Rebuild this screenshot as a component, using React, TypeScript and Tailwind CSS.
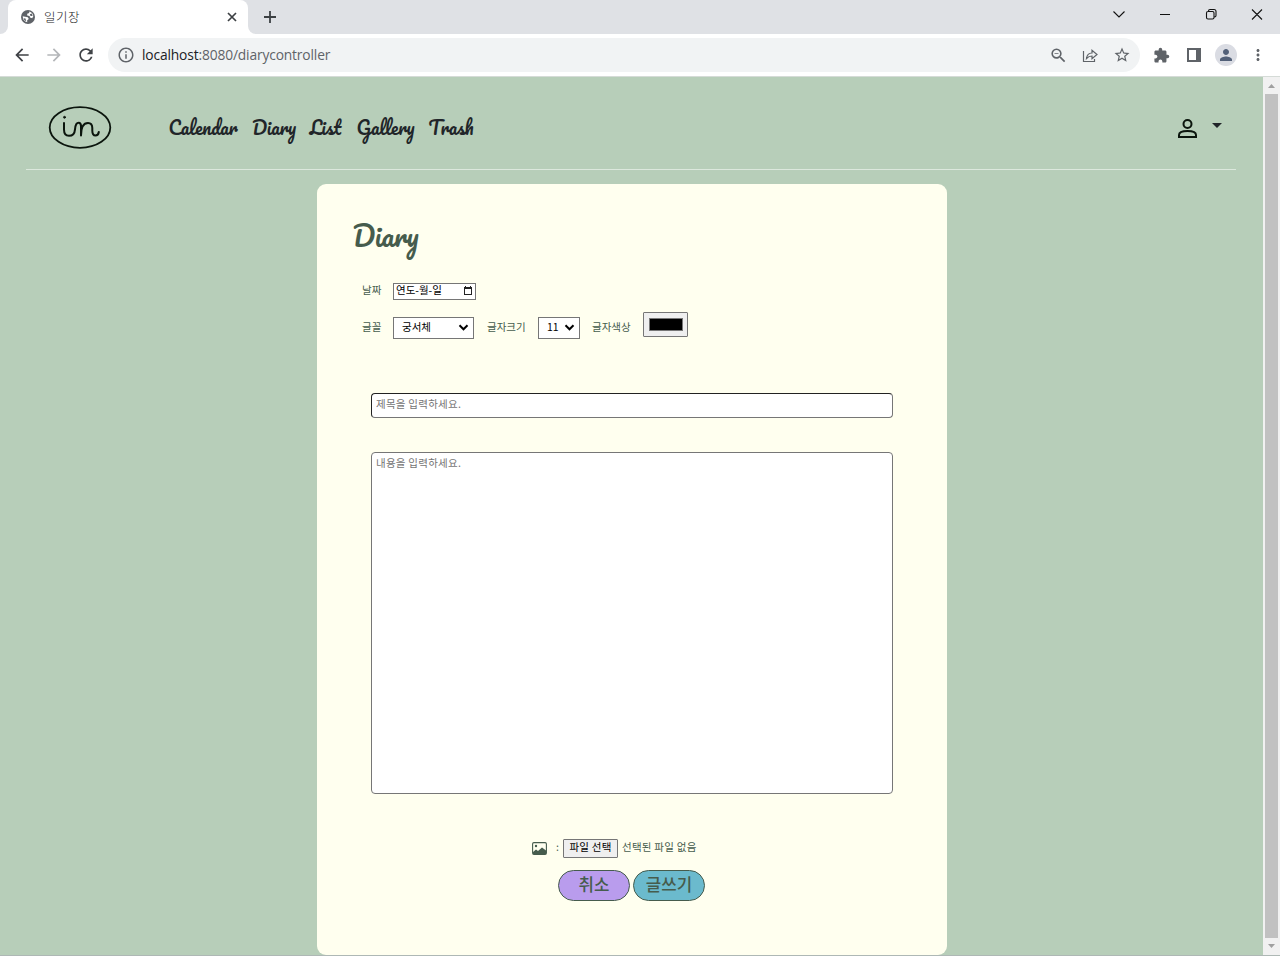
import React from 'react';
import {
  MdArrowBack,
  MdArrowForward,
  MdRefresh,
  MdInfoOutline,
  MdZoomOut,
  MdStarBorder,
  MdExtension,
  MdPerson,
  MdMoreVert,
} from 'react-icons/md';

function TabStrip() {
  return (
    <div className="flex h-[34px] bg-[#dfe1e5]">
      <div className="flex w-2 items-end bg-white">
        <div className="h-[34px] w-2 rounded-br-lg bg-[#dfe1e5]" />
      </div>
      <div className="flex h-[34px] w-[240px] items-center rounded-t-lg bg-white pl-[13px]">
        <svg className="size-[14px]" viewBox="0 0 14 14">
          <circle cx="7" cy="7" r="7" fill="#5f6368" />
          <path fill="#fff" d="M8.200 1.600L8.200 3 6.200 3.800 6.200 5.600 8.600 6 9 7.600 11.200 8.200 12.300 6.200Q12 2.800 8.200 1.600ZM1.700 6.300L4.200 6.800 6.800 7.200 7.800 9 6.200 10.300 6.200 12.300Q2 11.500 1.700 6.300Z" />
          <path fill="#5f6368" d="M8.800 4.200L11 3.600 11.500 6 9.500 6ZM2.500 8.200L4.500 8.500 5.200 11.300Q3 10.500 2.500 8.200Z" />
        </svg>
        <span className="ml-[9px] mb-[2px] w-[160px] text-[12.5px] font-light leading-[17px] tracking-[0.500px] text-[#202124]">일기장</span>
        <svg className="ml-[23px] size-[10px]" viewBox="0 0 10 10" fill="none" stroke="#3c4043" strokeWidth="1.700">
          <path d="M1 1l8 8M9 1l-8 8" />
        </svg>
      </div>
      <div className="w-2 bg-white">
        <div className="h-[34px] w-2 rounded-bl-lg bg-[#dfe1e5]" />
      </div>
      <svg className="ml-[8px] mt-[11px] size-3" viewBox="0 0 12 12" fill="none" stroke="#3c4043" strokeWidth="1.800">
        <path d="M6 0v12M0 6h12" />
      </svg>
      <div className="flex-1" />
      <svg className="h-[28px] w-[172px]" viewBox="-10 0 172 28" fill="none" stroke="#111" strokeWidth="1.1">
        <path d="M-4.500 11.500l5.500 5.500 5.500-5.500" />
        <path d="M42 14.500h10M88.500 13q0-1.500 1.500-1.500h4.500q1.500 0 1.500 1.500v4.500q0 1.500-1.500 1.500h-4.500q-1.500 0-1.500-1.500zM90.500 11.500v-.5q0-1.500 1.500-1.500h4q2 0 2 2v4q0 1.500-1.500 1.500M134 9.500l10 10M144 9.500l-10 10" />
      </svg>
    </div>
  );
}

function Toolbar() {
  return (
    <div className="flex h-[43px] items-center border-b border-[#d5dbd7] bg-white pl-3 text-[#5f6368]">
      <MdArrowBack className="size-5 text-[#3f4246]" />
      <MdArrowForward className="ml-3 size-5 text-[#b4b6b9]" />
      <MdRefresh className="ml-3 size-5 text-[#3f4246]" />
      <div className="ml-3 flex h-[34px] w-[1032px] items-center rounded-full bg-[#f1f3f4] pl-[9px]">
        <MdInfoOutline className="size-[18px]" />
        <span className="ml-[7px] w-[907px] font-['Open_Sans'] text-[13.8px] tracking-[-0.150px]">
          <span className="text-[#202124]">localhost</span>:8080/diarycontroller
        </span>
        <MdZoomOut className="size-[19px]" />
        <svg className="ml-[14px] size-4" viewBox="0 0 16 16" fill="none" stroke="currentColor" strokeWidth="1.200">
          <path d="M1.500 4v10.500h11V12M4.500 11.500C5 7.500 7.500 6 10 6V3.200L15 7.500 10 11.700V9C7.500 9 6 9.800 4.500 11.500Z" />
        </svg>
        <MdStarBorder className="ml-[15px] size-[18px]" />
      </div>
      <MdExtension className="ml-[13px] size-[17px]" />
      <svg className="ml-[17px] h-[14px] w-[14px]" viewBox="0 0 14 14">
        <path fill="currentColor" fillRule="evenodd" d="M0 0h14v14H0zM2 2v10h7V2z" />
      </svg>
      <div className="ml-[14px] flex size-[22px] items-center justify-center rounded-full bg-[#dadce3]">
        <MdPerson className="size-[18px] text-[#526078]" />
      </div>
      <MdMoreVert className="ml-[12px] size-[18px]" />
    </div>
  );
}

const links = [
  { label: 'Calendar', style: 'w-[83.500px]' },
  { label: 'Diary', style: 'w-[57.500px]' },
  { label: 'List', style: 'w-[47px]' },
  { label: 'Gallery', style: 'w-[72px]' },
  { label: 'Trash', style: 'w-[50px]' },
];

function Header() {
  return (
    <header className="ml-[26px] mr-[27px] flex h-[93px] border-b border-[#dce8dd]">
      <svg className="ml-[22px] mt-[28px] h-[46px] w-[64px]" viewBox="0 0 64 46" fill="none" stroke="#0b150d" strokeLinecap="round" strokeLinejoin="round">
        <ellipse cx="32" cy="22.500" rx="30.300" ry="20.300" strokeWidth="1.800" />
        <circle cx="16.500" cy="12.300" r="1" fill="#0b150d" strokeWidth=".8" />
        <path d="M16 18v6.500q0 6.300 5 6.300 5.500 0 6-6.500.5-6.500 3.700-6.500 2.300 0 2.300 3.500v9.200q0-12.500 7-12.500 4.300 0 4.300 5v2.500q0 5 3.200 5 2.800 0 3.300-3.500" strokeWidth="2" />
      </svg>
      <nav className="ml-[56.500px] mt-[34px] flex font-[Pacifico,cursive] text-[18px] leading-[34px] text-[#212529]">
        {links.map((l) => (
          <a key={l.label} className={'block whitespace-nowrap ' + l.style}>
            {l.label}
          </a>
        ))}
      </nav>
      <div className="flex-1" />
      <svg className="mr-[14px] mt-[41px] h-[22px] w-[45px]" viewBox="0 0 45 22">
        <g fill="none" stroke="#0b150d" strokeWidth="2">
          <circle cx="10.500" cy="6" r="4" />
          <path d="M2 19v-2q0-4 8.500-4t8.500 4V19z" />
        </g>
        <path d="M35 5h10l-5 5z" fill="#212529" />
      </svg>
    </header>
  );
}

function SelectBox({ value, className }: { value: string; className: string }) {
  return (
    <div className={'flex h-[22px] items-center justify-between border border-[#767676] bg-white pr-[4px] text-black ' + className}>
      <span className="pb-px">{value}</span>
      <svg className="h-[7px] w-[11px]" viewBox="0 0 11 7" fill="none" stroke="#000" strokeWidth="2">
        <path d="M1.500 1.300l4 4 4-4" />
      </svg>
    </div>
  );
}

function DiaryForm() {
  return (
    <main className="ml-[317px] mt-[14px] h-[771px] w-[630px] rounded-[9px] bg-[#ffffef] pt-[32px] text-[10.500px] text-[#465c4d]">
      <h1 className="ml-[35.500px] h-[42px] font-[Pacifico,cursive] text-[27px] font-normal leading-[40px]">Diary</h1>

      <div className="ml-[45px] mt-[25px] flex h-[17px] items-center">
        <label className="w-[31px] pb-[3px] leading-[14px]">날짜</label>
        <div className="flex h-[17px] w-[83px] items-center justify-between border border-[#767676] bg-white pl-[2px] pr-[3px] text-black">
          <span className="pb-[3px] leading-[14px]">연도-월-일</span>
          <svg className="mb-[2px] h-[9px] w-[8px]" viewBox="0 0 8 9">
            <path fill="#222" fillRule="evenodd" d="M0 1h1V0h1v1h4V0h1v1h1v8H0zM1 3v5h6V3z" />
          </svg>
        </div>
      </div>

      <div className="ml-[45px] mt-[12px] flex h-[31px] items-center">
        <label className="w-[31px] pb-px">글꼴</label>
        <SelectBox value="궁서체" className="w-[81px] pl-[8px]" />
        <label className="ml-[13px] w-[51px] pb-px">글자크기</label>
        <SelectBox value="11" className="w-[42px] pl-[8px]" />
        <label className="ml-[12px] w-[51px] pb-px">글자색상</label>
        <div className="mb-[6px] h-[25px] w-[45px] rounded-[1px] border border-[#767676] bg-[#efefef] px-[5px] py-[5px]">
          <div className="h-[13px] w-[34px] border border-[#777] bg-black" />
        </div>
      </div>

      <input
        className="ml-[54px] mt-[50px] block h-[25px] w-[522px] rounded-[4px] border border-[#767676] border-l-[#222] border-t-[#222] bg-white pb-[4px] pl-[4px] text-[10.500px] tracking-[0.250px] placeholder:text-[#757575]"
        placeholder="제목을 입력하세요."
      />
      <textarea
        className="ml-[54px] mt-[34px] block h-[342px] w-[522px] resize-none rounded-[4px] border border-[#767676] bg-white py-[3px] pl-[4px] text-[10.500px] leading-[14px] tracking-[0.250px] placeholder:text-[#757575]"
        placeholder="내용을 입력하세요."
      />

      <div className="ml-[215px] mt-[45px] flex h-[19px] items-center">
        <svg className="h-[13px] w-[15px]" viewBox="0 0 15 13">
          <rect x=".6" y=".6" width="13.800" height="11.800" rx="1.300" fill="#ffffef" stroke="#465c4d" strokeWidth="1.100" />
          <circle cx="4" cy="4" r="1.200" fill="#465c4d" />
          <path fill="#465c4d" d="M1 10l3-2.500 2 1.500 4-3.500L14 8.500V12H1z" />
        </svg>
        <span className="mb-[3px] ml-[9px] w-[7px]">:</span>
        <button className="h-[19px] w-[55px] rounded-[1px] border border-[#767676] bg-[#efefef] pb-[4px] leading-[14px] tracking-[0.200px] text-black">파일 선택</button>
        <span className="ml-[4px] pb-[4px] leading-[14px] tracking-[0.250px]">선택된 파일 없음</span>
      </div>

      <div className="ml-[241px] mt-[12px] flex gap-[3px] text-[16.800px] font-medium leading-[24px]">
        <button className="h-[31px] w-[72px] rounded-full border border-[#465c4d] bg-[#b99ced] pb-[4px]">취소</button>
        <button className="h-[31px] w-[72px] rounded-full border border-[#465c4d] bg-[#6bbacd] pb-[4px]">글쓰기</button>
      </div>
    </main>
  );
}

function Scrollbar() {
  return (
    <div className="flex h-[878px] w-[17px] flex-col items-center bg-[#f1f1f1]">
      <svg className="h-[17px] w-[17px]" viewBox="0 0 17 17">
        <path d="M5 11h7L8.500 7z" fill="#a0a0a0" />
      </svg>
      <div className="h-[844px] w-[13px] bg-[#c1c1c1]" />
      <svg className="h-[17px] w-[17px]" viewBox="0 0 17 17">
        <path d="M5 6h7l-3.500 4z" fill="#a0a0a0" />
      </svg>
    </div>
  );
}

export default function App() {
  return (
    <div className="h-[957px] w-[1280px] overflow-hidden bg-white font-['Noto_Sans_CJK_KR',sans-serif]">
      <TabStrip />
      <Toolbar />
      <div className="flex h-[878px]">
        <div className="w-[1263px] bg-[#b7ceb9]">
          <Header />
          <DiaryForm />
        </div>
        <Scrollbar />
      </div>
      <div className="h-px bg-[#aeb8b5]" />
    </div>
  );
}
